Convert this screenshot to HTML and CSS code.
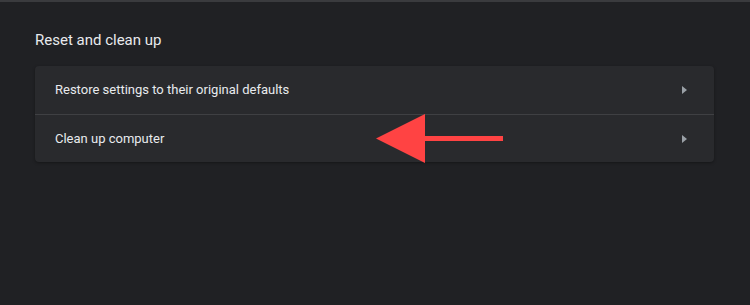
FILE: index.html
```html
<!DOCTYPE html>
<html lang="en">
<head>
    <meta charset="UTF-8">
    <meta name="viewport" content="width=device-width, initial-scale=1.0">
    <title>Reset and clean up</title>
    <link rel="stylesheet" href="styles.css">
</head>
<body>
    <div class="page">
        <h2 class="section-title">Reset and clean up</h2>
        <div class="card">
            <div class="row">
                <span class="row-label">Restore settings to their original defaults</span>
                <span class="row-arrow"></span>
            </div>
            <div class="row">
                <span class="row-label">Clean up computer</span>
                <span class="row-arrow"></span>
            </div>
        </div>
    </div>
    <!-- annotation arrow -->
    <svg class="pointer" width="130" height="52" viewBox="0 0 130 52">
        <polygon points="0,24.5 49,0 49,49" fill="#ff4343"/>
        <rect x="48" y="22" width="79" height="5" fill="#ff4343"/>
    </svg>
</body>
</html>
```

FILE: styles.css
```css
* {
    box-sizing: border-box;
}

body {
    margin: 0;
    padding: 0;
    background-color: #202124;
    font-family: Roboto, "Liberation Sans", sans-serif;
    color: #e8eaed;
    border-top: 2px solid #3a3b3e;
    min-height: 305px;
    position: relative;
}

.page {
    padding: 0 36px 0 35px;
}

.section-title {
    margin: 0;
    padding-top: 29px;
    font-size: 15px;
    font-weight: 400;
    line-height: 18px;
    color: #e8eaed;
    height: 64px;
}

.card {
    width: 679px;
    background-color: #292a2d;
    border-radius: 4px;
    box-shadow: 0 1px 3px rgba(0, 0, 0, 0.35);
}

.row {
    height: 48px;
    display: flex;
    align-items: center;
    justify-content: space-between;
    padding: 0 27px 0 20px;
}

.row + .row {
    border-top: 1px solid #3f4043;
}

.row-label {
    font-size: 13px;
    line-height: 16px;
}

.row-arrow {
    width: 0;
    height: 0;
    border-top: 4px solid transparent;
    border-bottom: 4px solid transparent;
    border-left: 5px solid #9aa0a6;
}

.pointer {
    position: absolute;
    left: 376px;
    top: 112px;
}
```
